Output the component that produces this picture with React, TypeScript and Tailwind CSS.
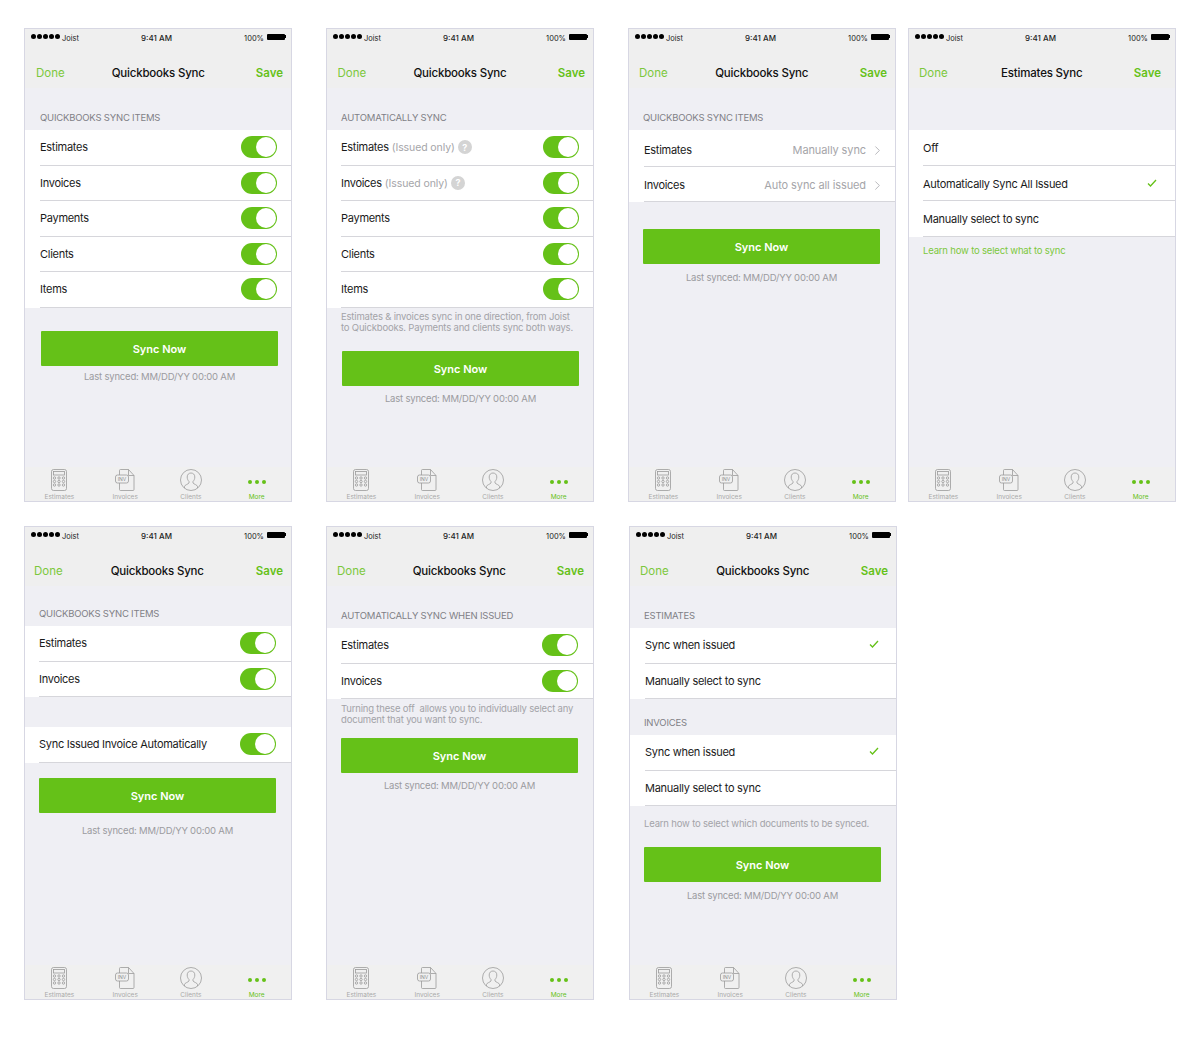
import type { ReactNode } from 'react';
import { ChevronRight } from 'lucide-react';

function Dots() {
  return (
    <div className="flex gap-[1px] -mt-[2px]">
      {[0, 1, 2, 3, 4].map((i) => (
        <span key={i} className="w-[5px] h-[5px] rounded-full bg-black" />
      ))}
    </div>
  );
}

function Battery() {
  return (
    <div className="flex items-center -mt-[2px]">
      <div className="w-[18px] h-[6px] bg-black rounded-[1px]" />
      <div className="w-[1px] h-[3px] bg-black" />
    </div>
  );
}

function CalcIcon() {
  return (
    <svg width="16" height="22" viewBox="0 0 16 22" fill="none" stroke="#9b9b9b" strokeWidth="0.8">
      <rect x="0.5" y="0.5" width="15" height="21" rx="2" />
      <rect x="2.5" y="2.5" width="11" height="3.5" />
      {[8.5, 12, 15.5].map((y) =>
        [3.5, 8, 12.5].map((x) => <circle key={`${x}-${y}`} cx={x} cy={y + 0.5} r="1.2" />),
      )}
    </svg>
  );
}

function InvIcon() {
  return (
    <svg width="20" height="22" viewBox="0 0 20 22" fill="none" stroke="#9b9b9b" strokeWidth="0.8">
      <path d="M4.5 6V1.5a1 1 0 0 1 1-1h8l5.5 6v14a1 1 0 0 1-1 1H5.5a1 1 0 0 1-1-1V14" />
      <path d="M13.5 0.5v6H19" />
      <rect x="0.5" y="6" width="13" height="8" rx="2" fill="#f0f0f0" />
      <text x="7" y="12" textAnchor="middle" fontSize="5" fill="#8a8a8a" stroke="none" fontFamily="Inter, sans-serif">
        INV
      </text>
    </svg>
  );
}

function ClientIcon() {
  return (
    <svg width="22" height="22" viewBox="0 0 22 22" fill="none" stroke="#9b9b9b" strokeWidth="0.8">
      <circle cx="11" cy="11" r="10.5" />
      <path d="M4.5 19v-1.500c0-1.500 4-2.500 4.500-3.500v-1.500c-1-1-1.800-2.500-1.800-4.500 0-2.500 1.600-4 3.800-4s3.800 1.500 3.800 4c0 2-.8 3.500-1.800 4.500V14c.5 1 4.500 2 4.500 3.500V19" />
    </svg>
  );
}

function Tab({ icon, label, active = false }: { icon: ReactNode; label: string; active?: boolean }) {
  return (
    <div className="flex flex-col items-center pt-[2px]">
      <div className="h-[22px] flex items-center justify-center">{icon}</div>
      <span className={`text-[6.5px] leading-[8px] mt-[2px] ${active ? 'text-[#65c118]' : 'text-[#a9a9a9]'}`}>
        {label}
      </span>
    </div>
  );
}

function Toggle() {
  return (
    <div className="w-[36px] h-[22px] rounded-full bg-[#65c118] flex items-center justify-end pr-[1px] shrink-0">
      <div className="w-[20px] h-[20px] rounded-full bg-white" />
    </div>
  );
}

function Check() {
  return (
    <svg width="10" height="8" viewBox="0 0 10 8" fill="none" stroke="#65c118" strokeWidth="1.3" className="-mt-[2px] mr-[3px]">
      <path d="M1 4.500l2.500 2.500L9 1" />
    </svg>
  );
}

function Help() {
  return (
    <span className="ml-[3px] w-[14px] h-[14px] rounded-full bg-[#d4d4d4] text-white text-[9px] font-bold flex items-center justify-center">
      ?
    </span>
  );
}

function Row({
  children,
  right,
  pad,
  end = 'pr-[14px]',
  height = 'h-[35.5px]',
  text = '',
}: {
  children: ReactNode;
  right?: ReactNode;
  pad: string;
  end?: string;
  height?: string;
  text?: string;
}) {
  return (
    <div className={`bg-white ${pad} ${height}`}>
      <div className={`h-full flex items-center justify-between border-b border-[#d6d6db] ${end} ${text}`}>
        <div className="flex items-center text-[11px] tracking-[-0.28px] text-[#1a1a1a]">{children}</div>
        {right}
      </div>
    </div>
  );
}

function Label({ children, className }: { children: ReactNode; className: string }) {
  return <div className={`text-[9.5px] leading-[12px] text-[#7f7f86] tracking-[-0.2px] ${className}`}>{children}</div>;
}

function Note({ children, className }: { children: ReactNode; className: string }) {
  return <div className={`text-[9.5px] leading-[11px] tracking-[-0.18px] text-[#a3a3a8] ${className}`}>{children}</div>;
}

function SyncButton({ className, lastClass }: { className: string; lastClass: string }) {
  return (
    <>
      <div
        className={`w-[237px] h-[35px] pt-[2px] bg-[#65c118] rounded-[1px] flex items-center justify-center text-white text-[11px] font-semibold ${className}`}
      >
        Sync Now
      </div>
      <div className={`w-[237px] text-center text-[9.5px] leading-[12px] tracking-[-0.2px] text-[#9b9b9f] ${lastClass}`}>
        Last synced: MM/DD/YY 00:00 AM
      </div>
    </>
  );
}

function Phone({
  title,
  left,
  nav = 'pl-[11px] pr-[8px]',
  titleClass = 'mr-[4px]',
  children,
}: {
  title: string;
  left: string;
  nav?: string;
  titleClass?: string;
  children: ReactNode;
}) {
  return (
    <div className={`w-[268px] h-[474px] border border-[#d7d7e3] bg-[#efeff4] flex flex-col overflow-hidden ${left}`}>
      <div className="h-[59px] bg-[#efefef] shrink-0">
        <div className="h-[17px] pl-[6px] pr-[5px] flex items-center justify-between text-[7.5px] text-[#222]">
          <div className="flex items-center gap-[2px] w-[98px]">
            <Dots />
            <span className="mt-[2px]">Joist</span>
          </div>
          <span className="font-medium text-[8px]">9:41 AM</span>
          <div className="flex items-center justify-end gap-[3px] w-[102px]">
            <span className="mt-[2px]">100%</span>
            <Battery />
          </div>
        </div>
        <div className={`mt-[19px] flex items-center justify-between text-[11.5px] leading-[16px] ${nav}`}>
          <span className="text-[#7cc83c]">Done</span>
          <span className={`font-medium text-[#111] tracking-[-0.2px] ${titleClass}`}>{title}</span>
          <span className="font-semibold text-[#65c118]">Save</span>
        </div>
      </div>
      <div className="flex-1 flex flex-col">{children}</div>
      <div className="h-[34px] bg-[#f0f0f0] grid grid-cols-4 px-[1.5px] shrink-0">
        <Tab icon={<CalcIcon />} label="Estimates" />
        <Tab icon={<InvIcon />} label="Invoices" />
        <Tab icon={<ClientIcon />} label="Clients" />
        <Tab
          active
          label="More"
          icon={
            <div className="flex gap-[3px] mt-[4px]">
              <span className="w-[4px] h-[4px] rounded-full bg-[#65c118]" />
              <span className="w-[4px] h-[4px] rounded-full bg-[#65c118]" />
              <span className="w-[4px] h-[4px] rounded-full bg-[#65c118]" />
            </div>
          }
        />
      </div>
    </div>
  );
}

function Value({ children }: { children: string }) {
  return (
    <div className="flex items-center gap-[4px] text-[11px] tracking-[-0.1px] text-[#a5a5a9]">
      {children}
      <ChevronRight className="w-[15px] h-[15px] text-[#a8a8ac]" strokeWidth={1.3} />
    </div>
  );
}

const issued = <span className="ml-[3px] mt-[2px] text-[10.5px] tracking-[-0.1px] text-[#a5a5a9]">(Issued only)</span>;

export default function App() {
  return (
    <div className="w-[1200px] h-[1045px] bg-white pt-[28px] pl-[24px] font-['Inter',sans-serif]">
      <div className="flex">
        <Phone title="Quickbooks Sync" left="">
          <Label className="mt-[24px] mb-[6px] pl-[15px]">QUICKBOOKS SYNC ITEMS</Label>
          <Row pad="pl-[15px]" right={<Toggle />}>Estimates</Row>
          <Row pad="pl-[15px]" right={<Toggle />}>Invoices</Row>
          <Row pad="pl-[15px]" right={<Toggle />}>Payments</Row>
          <Row pad="pl-[15px]" right={<Toggle />}>Clients</Row>
          <Row pad="pl-[15px]" right={<Toggle />}>Items</Row>
          <SyncButton className="mt-[23.5px] ml-[16px]" lastClass="mt-[5px] ml-[16px]" />
        </Phone>
        <Phone title="Quickbooks Sync" left="ml-[34px]" nav="pl-[10.5px] pr-[8px]">
          <Label className="mt-[24px] mb-[6px] pl-[14px]">AUTOMATICALLY SYNC</Label>
          <Row pad="pl-[14px]" right={<Toggle />}>Estimates{issued}<Help /></Row>
          <Row pad="pl-[14px]" right={<Toggle />}>Invoices{issued}<Help /></Row>
          <Row pad="pl-[14px]" right={<Toggle />}>Payments</Row>
          <Row pad="pl-[14px]" right={<Toggle />}>Clients</Row>
          <Row pad="pl-[14px]" right={<Toggle />}>Items</Row>
          <Note className="mt-[3px] pl-[14px]">
            Estimates &amp; invoices sync in one direction, from Joist
            <br />
            to Quickbooks. Payments and clients sync both ways.
          </Note>
          <SyncButton className="mt-[18px] ml-[15px]" lastClass="mt-[7px] ml-[15px]" />
        </Phone>
        <Phone title="Quickbooks Sync" left="ml-[34px]" nav="pl-[10px] pr-[8px]">
          <Label className="mt-[24px] mb-[6px] pl-[14px]">QUICKBOOKS SYNC ITEMS</Label>
          <Row pad="pl-[15px]" end="pr-[10px]" height="h-[37px]" text="pt-[4px]" right={<Value>Manually sync</Value>}>Estimates</Row>
          <Row pad="pl-[15px]" end="pr-[10px]" height="h-[35px]" text="pt-[2px]" right={<Value>Auto sync all issued</Value>}>Invoices</Row>
          <SyncButton className="mt-[27px] ml-[14px]" lastClass="mt-[8px] ml-[14px]" />
        </Phone>
        <Phone title="Estimates Sync" left="ml-[12px]" nav="pl-[10px] pr-[14px]" titleClass="-mr-[2px]">
          <div className="h-[42px]" />
          <Row pad="pl-[14px]" text="pt-[2px]">Off</Row>
          <Row pad="pl-[14px]" text="pt-[2px]" right={<Check />} end="pr-[15px]">Automatically Sync All Issued</Row>
          <Row pad="pl-[14px]" text="pt-[2px]">Manually select to sync</Row>
          <Note className="mt-[8px] pl-[14px] !text-[#7cc83c]">Learn how to select what to sync</Note>
        </Phone>
      </div>
      <div className="flex mt-[24px]">
        <Phone title="Quickbooks Sync" left="" nav="pl-[9px] pr-[8px]">
          <Label className="mt-[22px] mb-[6px] pl-[14px]">QUICKBOOKS SYNC ITEMS</Label>
          <Row pad="pl-[14px]" end="pr-[15px]" right={<Toggle />}>Estimates</Row>
          <Row pad="pl-[14px]" end="pr-[15px]" right={<Toggle />}>Invoices</Row>
          <div className="h-[30px]" />
          <Row pad="pl-[14px]" end="pr-[15px]" right={<Toggle />}>Sync Issued Invoice Automatically</Row>
          <SyncButton className="mt-[15px] ml-[14px]" lastClass="mt-[12px] ml-[14px]" />
        </Phone>
        <Phone title="Quickbooks Sync" left="ml-[34px]" nav="pl-[10px] pr-[9px]">
          <Label className="mt-[24px] mb-[6px] pl-[14px]">AUTOMATICALLY SYNC WHEN ISSUED</Label>
          <Row pad="pl-[14px]" end="pr-[15px]" right={<Toggle />}>Estimates</Row>
          <Row pad="pl-[14px]" end="pr-[15px]" right={<Toggle />}>Invoices</Row>
          <Note className="mt-[4px] pl-[14px]">
            Turning these off&nbsp; allows you to individually select any
            <br />
            document that you want to sync.
          </Note>
          <SyncButton className="mt-[13px] ml-[14px]" lastClass="mt-[7px] ml-[14px]" />
        </Phone>
        <Phone title="Quickbooks Sync" left="ml-[35px]" nav="pl-[10px] pr-[8px]">
          <Label className="mt-[24px] mb-[6px] pl-[14px]">ESTIMATES</Label>
          <Row pad="pl-[15px]" right={<Check />} end="pr-[14px]">Sync when issued</Row>
          <Row pad="pl-[15px]">Manually select to sync</Row>
          <Label className="mt-[18px] mb-[6px] pl-[14px]">INVOICES</Label>
          <Row pad="pl-[15px]" right={<Check />} end="pr-[14px]">Sync when issued</Row>
          <Row pad="pl-[15px]">Manually select to sync</Row>
          <Note className="mt-[12px] pl-[14px]">Learn how to select which documents to be synced.</Note>
          <SyncButton className="mt-[18px] ml-[14px]" lastClass="mt-[8px] ml-[14px]" />
        </Phone>
      </div>
    </div>
  );
}
